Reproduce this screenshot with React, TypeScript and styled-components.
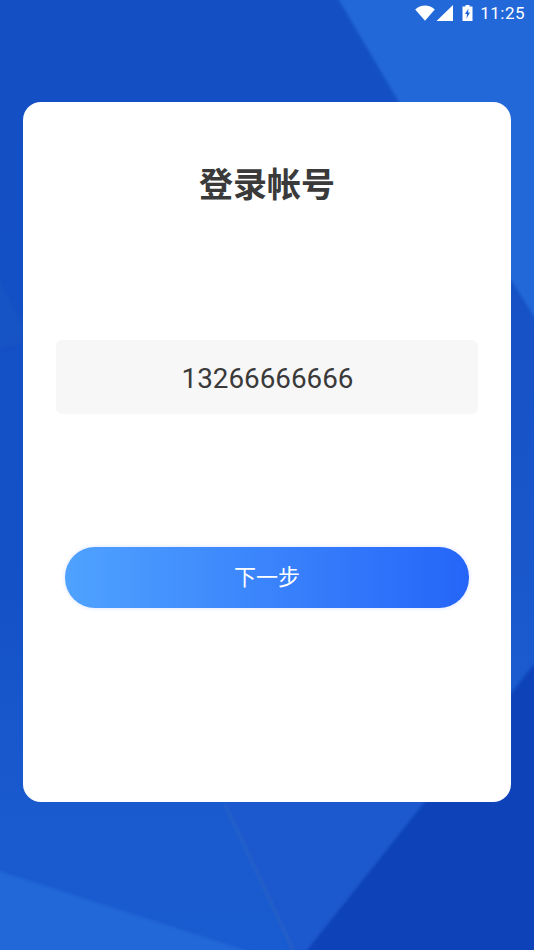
import React from 'react';
import styled, { createGlobalStyle } from 'styled-components';

const GlobalStyle = createGlobalStyle`
  html, body {
    margin: 0;
    padding: 0;
  }
  body {
    font-family: Roboto, "Noto Sans CJK SC", sans-serif;
  }
`;

const Screen = styled.div`
  position: relative;
  width: 534px;
  height: 950px;
  overflow: hidden;
  background: linear-gradient(180deg, #1450c4 0%, #1450c6 60%, #1a5bcf 88%, #195bd0 100%);
`;

const Wallpaper = styled.svg`
  position: absolute;
  inset: 0;
  width: 534px;
  height: 950px;
`;

const Content = styled.div`
  position: relative;
  display: flex;
  flex-direction: column;
  height: 100%;
`;

const StatusBar = styled.div`
  display: flex;
  align-items: center;
  justify-content: flex-end;
  height: 26px;
  padding-right: 9px;
  color: #fff;
`;

const Clock = styled.span`
  margin-left: 7px;
  font-size: 17px;
  letter-spacing: 0.5px;
`;

const Card = styled.main`
  display: flex;
  flex-direction: column;
  align-items: center;
  width: 488px;
  height: 700px;
  margin: 76px 0 0 23px;
  padding-top: 60px;
  box-sizing: border-box;
  background: #fff;
  border-radius: 18px;
`;

const Title = styled.h1`
  margin: 0;
  font-size: 34px;
  line-height: 46px;
  font-weight: 700;
  color: #3a3a3a;
`;

const PhoneField = styled.div`
  width: 422px;
  height: 74px;
  margin: 132px 0 0 -1px;
  padding: 2px 0 0 2px;
  box-sizing: border-box;
  display: flex;
  align-items: center;
  justify-content: center;
  background: #f7f7f7;
  border-radius: 6px;
  font-size: 27.8px;
  color: #3a3a3a;
`;

const NextButton = styled.button`
  width: 404px;
  height: 61px;
  margin: 133px 0 0 0;
  padding: 0 0 5px;
  border: 0;
  border-radius: 30px;
  background: linear-gradient(90deg, #4fa2ff 0%, #2565f8 100%);
  box-shadow: 0 0 4px rgba(80, 120, 255, 0.22);
  font-family: inherit;
  font-size: 22px;
  color: #fff;
`;

const App = () => (
  <Screen>
    <GlobalStyle />
    <Wallpaper viewBox="0 0 534 950">
      <defs>
        <filter id="soft"><feGaussianBlur stdDeviation="1.5" /></filter>
        <linearGradient id="rightStrip" x1="0" y1="0" x2="0" y2="1">
          <stop offset="0" stopColor="#1650c4" />
          <stop offset="1" stopColor="#1b5bd0" />
        </linearGradient>
      </defs>
      <path d="M490 250 L540 326 L540 670 L490 730 Z" fill="url(#rightStrip)" />
      <g filter="url(#soft)">
        <path d="M336 -5 L399 102 L540 326 L540 -5 Z" fill="#2068d8" />
        <path d="M-5 870 L260 955 L-5 955 Z" fill="#2068d8" />
        <path d="M-5 270 L30 340 L-5 350 Z" fill="#1753c4" />
        <path d="M226 800 L425 800 L307 955 L293 955 Z" fill="#1b58ce" />
        <path d="M540 657 L303 955 L540 955 Z" fill="#0e43b8" />
      </g>
      <path d="M225 804 L293 950" stroke="#2560c8" strokeWidth="3" filter="url(#soft)" />
    </Wallpaper>
    <Content>
      <StatusBar>
        <svg width="20" height="16" viewBox="0 0 20 16">
          <path d="M0.2 4.5 C5.5 -0.8 14.5 -0.8 19.8 4.5 L10 15.8 Z" fill="#fff" />
        </svg>
        <svg width="17" height="16" viewBox="0 0 17 16" style={{ marginLeft: 1 }}>
          <path d="M17 0 V16 H0.5 Z" fill="#fff" />
        </svg>
        <svg width="11" height="16" viewBox="0 0 11 16" style={{ marginLeft: 9 }}>
          <path d="M3.5 0 H7.5 V1.5 H10.5 V16 H0.5 V1.5 H3.5 Z" fill="#fff" />
          <path d="M6.5 3.5 L3 9 H5 L4.5 13.5 L8 7.5 H6 Z" fill="#1e63d6" />
        </svg>
        <Clock>11:25</Clock>
      </StatusBar>
      <Card>
        <Title>登录帐号</Title>
        <PhoneField>13266666666</PhoneField>
        <NextButton type="button">下一步</NextButton>
      </Card>
    </Content>
  </Screen>
);

export default App;
